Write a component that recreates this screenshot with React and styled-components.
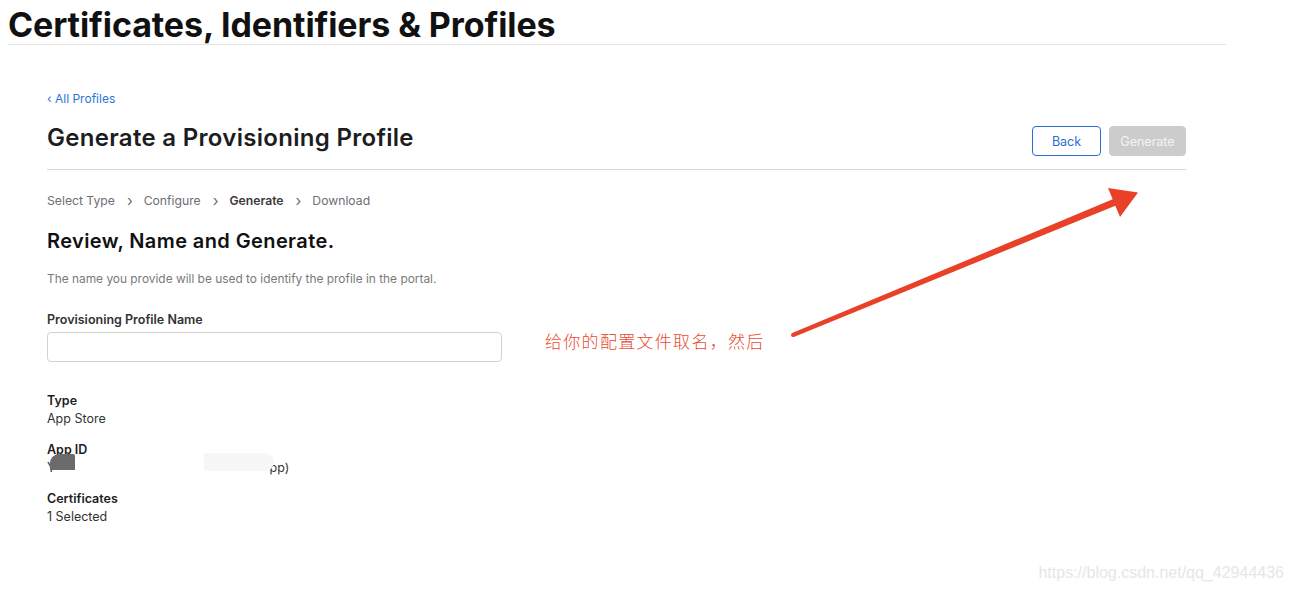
import React from "react";
import styled, { createGlobalStyle } from "styled-components";

const Global = createGlobalStyle`
  html, body { margin: 0; padding: 0; background: #fff; }
  body { font-family: Inter, "Noto Sans", "Liberation Sans", sans-serif; color: #1d1d1f; }
  * { box-sizing: border-box; }
`;

const Page = styled.div`
  position: relative;
  width: 1293px;
  height: 591px;
  overflow: hidden;
`;

const Header = styled.header`
  margin: 0 67px 0 8px;
  border-bottom: 1px solid #e3e3e3;
`;

const SiteTitle = styled.h1`
  margin: 0;
  padding-top: 5px;
  font-size: 34px;
  line-height: 39px;
  font-weight: 700;
  letter-spacing: -0.1px;
  color: #111;
`;

const Main = styled.main`
  margin-left: 47px;
  width: 1139px;
  padding-top: 42px;
`;

const BackLink = styled.a`
  display: inline-flex;
  align-items: center;
  gap: 4px;
  font-size: 12px;
  line-height: 18px;
  color: #2d75d2;
  text-decoration: none;
`;

const TitleBar = styled.div`
  display: flex;
  align-items: flex-end;
  justify-content: space-between;
  margin-top: 14px;
  padding-bottom: 13px;
  border-bottom: 1px solid #d8d8d8;
`;

const PageTitle = styled.h2`
  margin: 0 0 3px;
  font-size: 24px;
  line-height: 31px;
  font-weight: 600;
  letter-spacing: 0.3px;
  color: #1d1d1f;
`;

const Buttons = styled.div`
  display: flex;
  gap: 8px;
`;

const Button = styled.button`
  height: 30px;
  padding: 0;
  width: ${(p) => (p.$primary ? "77px" : "69px")};
  border-radius: 4px;
  font-family: inherit;
  font-size: 12.5px;
  border: 1px solid ${(p) => (p.$primary ? "#cccccc" : "#2a6fcf")};
  background: ${(p) => (p.$primary ? "#cccccc" : "#fff")};
  color: ${(p) => (p.$primary ? "#f4f4f4" : "#2a6fcf")};
`;

const Steps = styled.ol`
  display: flex;
  align-items: center;
  list-style: none;
  margin: 22px 0 0;
  padding: 0;
  font-size: 12.2px;
  line-height: 18px;
  color: #6e6e73;
`;

const Step = styled.li`
  display: flex;
  align-items: center;
  font-weight: ${(p) => (p.$active ? 600 : 400)};
  color: ${(p) => (p.$active ? "#3a3a3c" : "#6e6e73")};
  &:not(:last-child)::after {
    content: "›";
    font-weight: 400;
    color: #6e6e73;
    font-size: 15px;
    margin: 0 11px 0 12px;
  }
`;

const SectionTitle = styled.h3`
  margin: 18px 0 0;
  font-size: 20px;
  line-height: 26px;
  font-weight: 600;
  letter-spacing: 0.4px;
  color: #111;
`;

const Description = styled.p`
  margin: 16px 0 0;
  font-size: 11.9px;
  line-height: 18px;
  color: #7a7a7a;
`;

const FieldLabel = styled.label`
  display: block;
  margin-top: 23px;
  font-size: 12.5px;
  line-height: 18px;
  font-weight: 600;
  color: #333;
`;

const TextInput = styled.input`
  display: block;
  margin-top: 3px;
  width: 455px;
  height: 30px;
  border: 1px solid #d2d2d2;
  border-radius: 4px;
  outline: none;
`;

const Details = styled.dl`
  margin: 30px 0 0;
  display: flex;
  flex-direction: column;
  gap: 13px;
`;

const Detail = styled.div`
  position: relative;
`;

const DetailName = styled.dt`
  font-size: 12.5px;
  line-height: 18px;
  font-weight: 600;
  color: #1d1d1f;
`;

const DetailValue = styled.dd`
  margin: 0;
  display: flex;
  font-size: 12.5px;
  line-height: 18px;
  color: #333;
`;

const Gap = styled.span`
  display: inline-block;
  width: ${(p) => p.$w}px;
`;

const Smudge = styled.span`
  position: absolute;
  left: ${(p) => p.$x}px;
  top: ${(p) => p.$y}px;
  width: ${(p) => p.$w}px;
  height: ${(p) => p.$h}px;
  background: ${(p) => p.$c};
  border-radius: ${(p) => p.$r};
  filter: blur(0.6px);
`;

const Note = styled.div`
  position: absolute;
  left: 545px;
  top: 330px;
  font-family: "Noto Sans CJK SC", sans-serif;
  font-size: 17px;
  font-weight: 300;
  line-height: 22px;
  color: #ea4a30;
  letter-spacing: 1.3px;
`;

const Arrow = styled.svg`
  position: absolute;
  left: 0;
  top: 0;
  pointer-events: none;
`;

const Watermark = styled.div`
  position: absolute;
  right: 9px;
  top: 562px;
  font-family: "Liberation Sans", Arial, sans-serif;
  font-size: 16px;
  line-height: 22px;
  color: #e6e6e6;
`;

export default function App() {
  return (
    <Page>
      <Global />
      <Header>
        <SiteTitle>Certificates, Identifiers &amp; Profiles</SiteTitle>
      </Header>
      <Main>
        <BackLink href="#">‹ All Profiles</BackLink>
        <TitleBar>
          <PageTitle>Generate a Provisioning Profile</PageTitle>
          <Buttons>
            <Button>Back</Button>
            <Button $primary disabled>Generate</Button>
          </Buttons>
        </TitleBar>
        <Steps>
          <Step>Select Type</Step>
          <Step>Configure</Step>
          <Step $active>Generate</Step>
          <Step>Download</Step>
        </Steps>
        <SectionTitle>Review, Name and Generate.</SectionTitle>
        <Description>
          The name you provide will be used to identify the profile in the portal.
        </Description>
        <FieldLabel htmlFor="pname">Provisioning Profile Name</FieldLabel>
        <TextInput id="pname" type="text" />
        <Details>
          <Detail>
            <DetailName>Type</DetailName>
            <DetailValue>App Store</DetailValue>
          </Detail>
          <Detail>
            <DetailName>App ID</DetailName>
            <DetailValue>
              Y<Gap $w={214} />pp)
            </DetailValue>
            <Smudge $x={3} $y={13} $w={25} $h={16} $c="#6b6b6b" $r="9px 2px 0 0" />
            <Smudge $x={157} $y={12} $w={70} $h={18} $c="#f7f7f7" $r="2px 10px 10px 2px" />
          </Detail>
          <Detail>
            <DetailName>Certificates</DetailName>
            <DetailValue>1 Selected</DetailValue>
          </Detail>
        </Details>
      </Main>
      <Note>给你的配置文件取名，然后</Note>
      <Arrow width="1293" height="591" viewBox="0 0 1293 591">
        <path
          d="M792.2 333.1 L1112.7 199.3 L1108 188 L1138 192.5 L1120 217 L1115.3 205.7 L793.8 336.9 Z"
          fill="#e94128"
        />
        <circle cx="793" cy="335" r="2" fill="#e94128" />
      </Arrow>
      <Watermark>https://blog.csdn.net/qq_42944436</Watermark>
    </Page>
  );
}
